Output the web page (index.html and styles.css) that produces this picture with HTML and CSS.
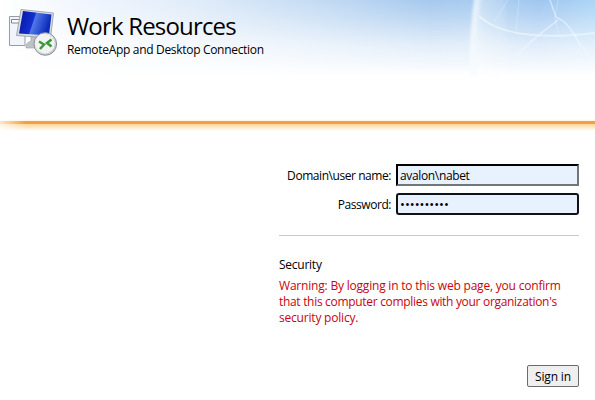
FILE: index.html
```html
<!DOCTYPE html>
<html lang="en">
<head>
  <meta charset="UTF-8">
  <title>RemoteApp and Desktop Connection</title>
  <link rel="stylesheet" href="styles.css">
</head>
<body>

<header class="banner">
  <svg class="globe" width="135" height="80" viewBox="0 0 135 80" fill="none" stroke="#f2faff">
    <defs>
      <linearGradient id="rim" x1="0" x2="1" y1="0" y2="0">
        <stop offset="0" stop-color="#fff" stop-opacity=".6"/>
        <stop offset=".3" stop-color="#fff" stop-opacity=".3"/>
        <stop offset="1" stop-color="#fff" stop-opacity="0"/>
      </linearGradient>
    </defs>
    <path class="soft" d="M15 -5Q9 32 10 80H58Q42 32 47 -5Z" fill="url(#rim)" stroke="none"/>
    <path class="soft" d="M18 -5Q12 32 14 76" stroke-width="6" stroke-opacity=".5"/>
    <g class="lines">
      <path d="M19 16C38 34 76 40 135 33" stroke-width="1.8" stroke-opacity=".6"/>
      <path d="M49 65C62 48 76 37 98 20M90 0L96 17Q107 22 113 33Q122 48 135 63" stroke-width="1.7" stroke-opacity=".5"/>
      <path d="M98 0L95 18L99 37M59 0L56 33M48 0L34 22M114 31L121 52" stroke-width="1.2" stroke-opacity=".25"/>
    </g>
  </svg>

  <svg class="logo" width="50" height="50" viewBox="0 0 50 50">
    <defs>
      <linearGradient id="screen" x1="0" x2="1" y1="0" y2=".25">
        <stop offset="0" stop-color="#0414a0"/>
        <stop offset=".5" stop-color="#1430d0"/>
        <stop offset=".53" stop-color="#5078e8"/>
        <stop offset="1" stop-color="#0a2cba"/>
      </linearGradient>
      <linearGradient id="metal" x1="0" x2="1" y1="0" y2="1">
        <stop offset="0" stop-color="#fff"/>
        <stop offset="1" stop-color="#b9bec4"/>
      </linearGradient>
    </defs>
    <path d="M1.500 8.500H17V37.500H1.500Z" fill="#f1f4f8" stroke="#969ca8"/>
    <path d="M3.500 11.500H12V15H3.500Z" fill="#fff" stroke="#7e8694"/>
    <path d="M23 28L31 30L32 40H18Q17 35 23 33Z" fill="#bec2c7" stroke="#9b9fa5" stroke-width=".6"/>
    <path d="M13 1.500L45.500 5L42.500 30L8.500 27.500Z" fill="#d9dde3" stroke="#9299a5" stroke-width=".8"/>
    <path d="M15 3L43.500 6.500L41 27.500L11 25.500Z" fill="url(#screen)"/>
    <circle cx="37.300" cy="36" r="11.300" fill="url(#metal)" stroke="#8b9096"/>
    <circle cx="37.300" cy="36" r="9.300" fill="#f1f2f2"/>
    <path d="M31 33.500L36 36.500L32 41M43.500 31.500L39 35L43.500 38.500" fill="none" stroke="#38983a" stroke-width="2.500"/>
  </svg>

  <div class="titles">
    <h1>Work Resources</h1>
    <p>RemoteApp and Desktop Connection</p>
  </div>
</header>
<div class="stripe"></div>

<form class="login" onsubmit="return false">
  <div class="row">
    <label for="user">Domain\user name:</label>
    <input class="user" id="user" type="text" value="avalon\nabet">
  </div>
  <div class="row">
    <label for="pass">Password:</label>
    <input class="pass" id="pass" type="password" value="0123456789">
  </div>

  <hr>

  <h2>Security</h2>
  <p class="warning">
    Warning: By logging in to this web page, you confirm<br>
    <span class="tight">that this computer complies with your organization's</span><br>
    security policy.
  </p>

  <button type="submit">Sign in</button>
</form>

</body>
</html>
```
FILE: styles.css
```css
* {
  box-sizing: border-box;
}
body {
  margin: 0;
  background: #fff;
  color: #000;
  font: 12px/16px "Segoe UI", "Open Sans", "Noto Sans", sans-serif;
  overflow: hidden;
}
h1, h2, p {
  margin: 0;
  font-weight: normal;
  white-space: nowrap;
}

/* banner */
.banner {
  position: relative;
  display: flex;
  height: 119px;
  padding: 8px 0 0 8px;
  background:
    linear-gradient(to bottom, rgba(255,255,255,0) 0, rgba(255,255,255,.2) 15px, rgba(255,255,255,.68) 45px, #fff 76px),
    linear-gradient(to right, #fff 0, #f4f8fe 60px, #dfebf9 200px, #c6dcf4 310px, #a6c9ee 430px, #a9cdf0 500px, #a0c6f0 540px, #acd5f5 595px);
}
.globe {
  position: absolute;
  top: 0;
  right: 0;
}
.soft {
  filter: blur(1.8px);
}
.lines {
  filter: blur(.4px);
}
.logo {
  flex: none;
}
.titles {
  padding-left: 9px;
}
.titles h1 {
  font-size: 24px;
  line-height: 24px;
  margin: 6px 0 4px;
  letter-spacing: -.82px;
}
.titles p {
  letter-spacing: -.31px;
}
.stripe {
  height: 15px;
  background: linear-gradient(to bottom, #fff 0, #fef3e2 2px, #f49f43 2px, #f49f43 5px, #fdd69b 5px, #fee7c3 8px, #fff 12px);
  -webkit-mask-image: linear-gradient(to right, rgba(0,0,0,.25), #000 26px);
  mask-image: linear-gradient(to right, rgba(0,0,0,.25), #000 26px);
}

/* sign in form */
.login {
  width: 300px;
  margin: 30px 0 0 279px;
}
.row {
  display: flex;
  justify-content: flex-end;
  align-items: center;
  height: 22px;
  margin-bottom: 7px;
}
.row label {
  margin-right: 5px;
  padding-top: 2px;
  letter-spacing: -.44px;
  white-space: nowrap;
}
input {
  width: 183px;
  height: 22px;
  padding: 0 2px;
  border: 2px inset #767676;
  background: #e8f2fe;
  color: #000;
  font: inherit;
  outline: none;
}
.user {
  border-color: #202328 #737679 #737679 #202328;
  letter-spacing: -.35px;
}
.pass {
  border: 2px solid #101218;
  border-radius: 3px;
  font-size: 13px;
}
hr {
  height: 1px;
  margin: 20px 0 21px;
  border: 0;
  background: #c9c9c9;
}
h2 {
  font-size: 12px;
  line-height: 16px;
  margin-bottom: 5px;
  letter-spacing: -.25px;
}
.warning {
  color: #c8040c;
  letter-spacing: -.2px;
}
.tight {
  letter-spacing: -.31px;
}
button {
  display: block;
  width: 52px;
  height: 22px;
  margin: 39px 0 0 auto;
  padding: 1px 0 0;
  border: 1px solid #6b6b6b;
  border-radius: 2px;
  background: #efefef;
  color: #000;
  font: inherit;
  letter-spacing: -.15px;
  white-space: nowrap;
}
```
